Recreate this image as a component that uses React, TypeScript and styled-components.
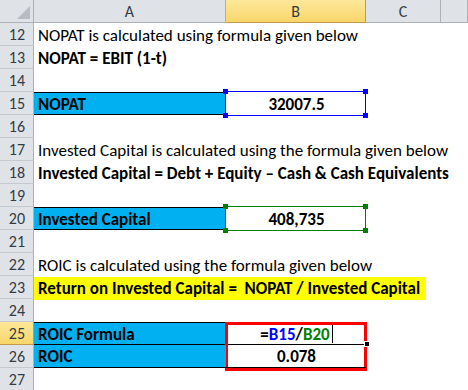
import styled, { createGlobalStyle, css } from 'styled-components'

const BLUE_FILL = '#00b0f0'
const HEADER_BG = '#dfe3e8'
const HEADER_LINE = '#abb1b9'
const SELECTED_BG = 'linear-gradient(to bottom, #fde89a, #f8d66a)'
const SELECTED_LINE = '#c29a4d'
const FONT = '"Carlito", "Liberation Sans", Arial, sans-serif'

const GlobalStyle = createGlobalStyle`
  html, body {
    margin: 0;
    padding: 0;
    background: #ffffff;
  }
  body {
    font-family: ${FONT};
    width: 468px;
    height: 390px;
    overflow: hidden;
  }
`

const Sheet = styled.div`
  display: grid;
  grid-template-columns: 34px 192px 140px 75px 27px;
  grid-auto-rows: 23px;
  width: 468px;
  height: 390px;
  overflow: hidden;
  font-size: 17px;
  color: #000;
`

const Corner = styled.div`
  position: relative;
  background: ${HEADER_BG};
  border-right: 1px solid ${HEADER_LINE};
  border-bottom: 1px solid ${HEADER_LINE};
  box-sizing: border-box;

  &::after {
    content: '';
    position: absolute;
    right: 3px;
    bottom: 3px;
    border-left: 13px solid transparent;
    border-bottom: 13px solid #b8bcc2;
  }
`

type SelectableProps = { $selected?: boolean }

const ColHeader = styled.div<SelectableProps>`
  display: flex;
  align-items: center;
  justify-content: center;
  box-sizing: border-box;
  background: ${HEADER_BG};
  border-right: 1px solid ${HEADER_LINE};
  border-bottom: 1px solid ${HEADER_LINE};
  font-family: ${FONT};
  font-size: 16px;
  color: #333b45;
  ${(p) =>
    p.$selected &&
    css`
      background: ${SELECTED_BG};
      border-right-color: ${SELECTED_LINE};
      border-bottom-color: ${SELECTED_LINE};
    `}
`

const RowHeader = styled.div<SelectableProps>`
  display: flex;
  align-items: center;
  justify-content: flex-end;
  padding: 1px 8px 0 0;
  box-sizing: border-box;
  background: ${HEADER_BG};
  border-right: 1px solid ${HEADER_LINE};
  border-bottom: 1px solid #c5cad1;
  font-size: 16px;
  color: #333b45;
  ${(p) =>
    p.$selected &&
    css`
      background: ${SELECTED_BG};
      border-bottom-color: ${SELECTED_LINE};
      border-right-color: ${SELECTED_LINE};
    `}
`

type CellProps = {
  $fill?: string
  $bold?: boolean
  $center?: boolean
  $ruledTop?: boolean
  $ruledBottom?: boolean
  $span?: number
}

const Cell = styled.div<CellProps>`
  position: relative;
  display: flex;
  align-items: center;
  justify-content: ${(p) => (p.$center ? 'center' : 'flex-start')};
  box-sizing: border-box;
  padding: 1px 3px 0 4px;
  white-space: nowrap;
  overflow: visible;
  background: ${(p) => p.$fill || 'transparent'};
  font-weight: ${(p) => (p.$bold ? 700 : 400)};
  border-top: ${(p) => (p.$ruledTop ? '1px solid #000' : '0')};
  border-bottom: ${(p) => (p.$ruledBottom ? '1px solid #000' : '0')};
  grid-column: span ${(p) => p.$span || 1};
  z-index: 1;
`

const Highlight = styled.span`
  background: #ffff00;
  margin-left: -4px;
  padding: 0 6px 0 4px;
  line-height: 23px;
`

const RefBox = styled.div<{ $color: string }>`
  position: absolute;
  left: -1px;
  top: -1px;
  right: 0;
  bottom: -1px;
  border: 1px solid ${(p) => p.$color};
  pointer-events: none;

  span {
    position: absolute;
    width: 5px;
    height: 5px;
    background: ${(p) => p.$color};
  }
  span:nth-child(1) { left: -3px; top: -3px; }
  span:nth-child(2) { right: -3px; top: -3px; }
  span:nth-child(3) { left: -3px; bottom: -3px; }
  span:nth-child(4) { right: -3px; bottom: -3px; }
`

const ActiveBox = styled.div`
  position: absolute;
  left: -1px;
  top: -1px;
  width: 142px;
  height: 49px;
  box-sizing: border-box;
  border: 3px solid #ff0000;
  pointer-events: none;
  z-index: 3;
`

const Ref = styled.span<{ $color: string }>`
  color: ${(p) => p.$color};
`

const Caret = styled.span`
  display: inline-block;
  width: 1px;
  height: 18px;
  margin-left: 2px;
  background: #000;
  vertical-align: middle;
`

const FillHandle = styled.div`
  position: absolute;
  right: -4px;
  bottom: -3px;
  width: 4px;
  height: 4px;
  background: #000;
  border: 1px solid #fff;
  z-index: 4;
`

function RefCorners({ color }: { color: string }) {
  return (
    <RefBox $color={color}>
      <span />
      <span />
      <span />
      <span />
    </RefBox>
  )
}

function TextRow({ n, text, bold, selected }: { n: number; text?: string; bold?: boolean; selected?: boolean }) {
  return (
    <>
      <RowHeader $selected={selected}>{n}</RowHeader>
      <Cell $bold={bold} $span={4}>
        {text}
      </Cell>
    </>
  )
}

export default function App() {
  return (
    <>
      <GlobalStyle />
      <Sheet>
        <Corner />
        <ColHeader>A</ColHeader>
        <ColHeader $selected>B</ColHeader>
        <ColHeader>C</ColHeader>
        <ColHeader />

        <TextRow n={12} text="NOPAT is calculated using formula given below" />
        <TextRow n={13} text="NOPAT = EBIT (1-t)" bold />
        <TextRow n={14} />

        <RowHeader>15</RowHeader>
        <Cell $fill={BLUE_FILL} $bold $ruledTop $ruledBottom>
          NOPAT
        </Cell>
        <Cell $bold $center>
          32007.5
          <RefCorners color="#0000ff" />
        </Cell>
        <Cell $span={2} />

        <TextRow n={16} />
        <TextRow n={17} text="Invested Capital is calculated using the formula given below" />
        <TextRow n={18} text="Invested Capital = Debt + Equity – Cash & Cash Equivalents" bold />
        <TextRow n={19} />

        <RowHeader>20</RowHeader>
        <Cell $fill={BLUE_FILL} $bold $ruledTop $ruledBottom>
          Invested Capital
        </Cell>
        <Cell $bold $center>
          408,735
          <RefCorners color="#008000" />
        </Cell>
        <Cell $span={2} />

        <TextRow n={21} />
        <TextRow n={22} text="ROIC is calculated using the formula given below" />

        <RowHeader>23</RowHeader>
        <Cell $bold $span={4}>
          <Highlight>Return on Invested Capital = &nbsp;NOPAT / Invested Capital</Highlight>
        </Cell>

        <TextRow n={24} />

        <RowHeader $selected>25</RowHeader>
        <Cell $fill={BLUE_FILL} $bold $ruledTop $ruledBottom>
          ROIC Formula
        </Cell>
        <Cell $bold $center $ruledTop $ruledBottom>
          =<Ref $color="#0000ff">B15</Ref>/<Ref $color="#008000">B20</Ref>
          <Caret />
          <ActiveBox />
          <FillHandle />
        </Cell>
        <Cell $span={2} />

        <RowHeader>26</RowHeader>
        <Cell $fill={BLUE_FILL} $bold $ruledBottom>
          ROIC
        </Cell>
        <Cell $bold $center $ruledBottom>
          0.078
        </Cell>
        <Cell $span={2} />

        <TextRow n={27} />
      </Sheet>
    </>
  )
}
